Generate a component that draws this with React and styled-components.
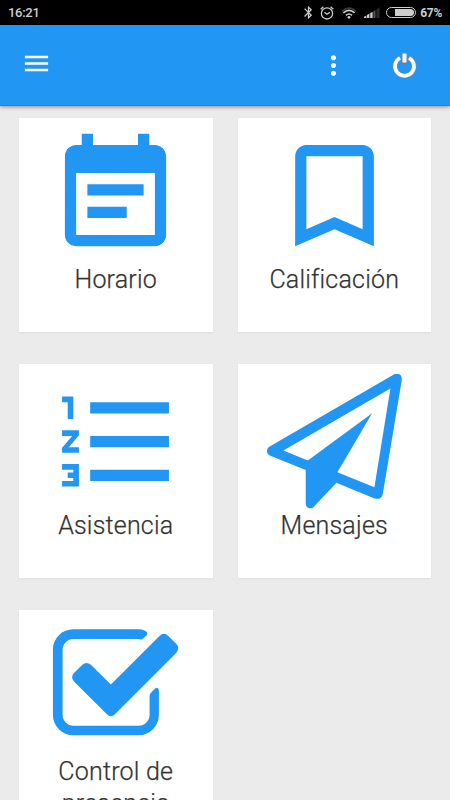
import React from 'react';
import styled, { createGlobalStyle } from 'styled-components';
import {
  MdBluetooth,
  MdBookmarkBorder,
  MdEventNote,
  MdFormatListNumbered,
  MdMenu,
  MdMoreVert,
} from 'react-icons/md';

const GlobalStyle = createGlobalStyle`
  * {
    box-sizing: border-box;
  }

  body {
    margin: 0;
    background-color: #ebebeb;
    font-family: Roboto, 'Liberation Sans', sans-serif;
  }
`;

// Styled components
const Screen = styled.div`
  display: flex;
  flex-direction: column;
  width: 450px;
  height: 800px;
  overflow: hidden;
  background-color: #ebebeb;
`;

const StatusBar = styled.div`
  display: flex;
  flex-shrink: 0;
  align-items: center;
  justify-content: space-between;
  height: 25px;
  padding: 0 8px;
  background-color: #000;
  color: #cdcdcd;
  font-size: 12px;
  font-weight: 700;

  svg {
    display: block;
  }
`;

const Clock = styled.span`
  font-size: 13px;
  font-weight: 500;
  letter-spacing: -0.3px;
`;

const StatusIcons = styled.div`
  display: flex;
  align-items: center;
`;

const StatusItem = styled.span`
  margin-left: ${({ $gap }) => $gap}px;
`;

const BatteryText = styled.span`
  margin-left: 4px;
  letter-spacing: -0.3px;
`;

const Battery = styled.span`
  display: flex;
  justify-content: flex-end;
  width: 30px;
  height: 11px;
  margin-left: 6px;
  padding: 1px;
  border: 1px solid #cdcdcd;
  border-radius: 6px;
`;

const BatteryLevel = styled.span`
  width: 19px;
  background-color: #cdcdcd;
  border-radius: 0 4px 4px 0;
`;

const Toolbar = styled.header`
  display: flex;
  flex-shrink: 0;
  align-items: center;
  justify-content: space-between;
  height: 81px;
  padding: 0 33px 0 21px;
  background-color: #2196f3;
  border-bottom: 1px solid #1787e8;
  box-shadow: 0 1px 4px rgba(0, 0, 0, 0.4);
  color: #fff;
  z-index: 1;
`;

const ToolbarButton = styled.button`
  display: flex;
  padding: 0;
  border: none;
  background: none;
  color: inherit;
  cursor: pointer;
  margin-bottom: ${({ $lift }) => $lift || 0}px;
`;

const ToolbarActions = styled.div`
  display: flex;
  align-items: center;
  gap: 43px;
  padding-top: 1px;
`;

const CardGrid = styled.main`
  display: grid;
  grid-template-columns: repeat(2, 193.5px);
  grid-auto-rows: 214.5px;
  gap: 31.8px 25px;
  padding: 11.7px 19px 0;
`;

const Card = styled.div`
  display: flex;
  flex-direction: column;
  align-items: center;
  padding: 10.5px 16px 0;
  background-color: #fff;
  box-shadow: 0 1px 2px rgba(0, 0, 0, 0.06);
  color: #2196f3;

  svg {
    flex-shrink: 0;
  }
`;

const CardTitle = styled.h2`
  margin: 0.4px 0 0;
  color: #333;
  font-size: 25px;
  font-weight: 300;
  line-height: 32px;
  letter-spacing: 0.2px;
  text-align: center;
  -webkit-text-stroke: 0.25px #333;
`;

const AlarmIcon = () => (
  <svg width="14" height="14" viewBox="0 0 14 14" fill="none" stroke="currentColor">
    <circle cx="7" cy="7.4" r="5.6" strokeWidth="1.3" />
    <path d="M4.4 6.2L7 8.2l2.8-1.8" strokeWidth="1.3" />
    <path d="M.7 3.2L3.4.8M13.3 3.2L10.6.8" strokeWidth="1.3" />
  </svg>
);

const WifiIcon = () => (
  <svg width="16" height="12" viewBox="0 0 16 12" fill="none" stroke="currentColor">
    <path d="M1 4.3Q8-2.1 15 4.3" stroke="#3a3a3a" strokeWidth="1.6" />
    <path d="M2.4 5.9Q8 .9 13.6 5.9" strokeWidth="1.6" />
    <path d="M4.9 8.4Q8 5.6 11.1 8.4" strokeWidth="1.5" />
    <circle cx="8" cy="10.3" r="1.4" fill="currentColor" stroke="none" />
  </svg>
);

const SignalIcon = () => (
  <svg width="16" height="11" viewBox="0 0 16 11" fill="currentColor">
    <path d="M0 11V9.7l2.4-1.3V11zM3 11V8l2.4-1.4V11zM6.2 11V6.3l2.4-1.5V11z" />
    <path d="M9.3 11V4.5l2.2-1.6V11z" opacity="0.4" />
    <path d="M12.4 11V2.4L15.6.3V11z" opacity="0.2" />
  </svg>
);

const PowerIcon = () => (
  <svg width="25" height="26" viewBox="0 0 25 26" fill="none">
    <path d="M8 4.8A9.5 9.5 0 1 0 17 4.8" stroke="#8a8f94" strokeWidth="4.8" />
    <rect x="9.8" y=".2" width="5.4" height="10" rx="1" fill="#8a8f94" />
    <path d="M8 5A9.5 9.5 0 1 0 17 5" stroke="#fff" strokeWidth="3.6" />
    <rect x="10.5" y=".5" width="4" height="9" rx="1" fill="#f4f4f4" />
  </svg>
);

const PlaneIcon = () => (
  <svg width="135" height="135" viewBox="0 .6 135 135" fill="currentColor" fillRule="evenodd">
    <path d="M127.7.6Q135-.9 134.8 6.5L115.7 121Q114.2 126.8 107.5 125L69.4 109.3 47.3 132.8C44.2 136.8 38.7 135 38.7 129.6V96.5L2.7 82C-.7 80.2-1.2 75.6 2.7 73.1ZM16.4 77L40.8 87.2 105.1 39.9 70.4 98.9 107.4 113.8 123.4 15.2Z" />
  </svg>
);

const CheckIcon = () => (
  <svg width="135" height="135" viewBox="-4.9 -8.2 135 135" fill="currentColor">
    <path d="M91.5 1.2Q96 3 93.8 6L89.7 9.7Q88.4 10.7 85.7 9.8H20.7A11 11 0 0 0 9.7 20.8V85.6A11 11 0 0 0 20.7 96.6H85.7A11 11 0 0 0 96.7 85.6V67Q96.7 64.8 98 63.5L101.7 59.7C103.5 57.7 106 58.4 106 61.5V85.6A20.3 20.3 0 0 1 85.7 106H20.3A20.3 20.3 0 0 1 0 85.6V20.3A20.3 20.3 0 0 1 20.3 0H85.7Q89 0 91.5 1.2Z" />
    <path d="M58 55.3L106.6 6.7Q111 2.5 115.4 6.7L123.5 14.8Q127.5 19 123.5 23.5L62 85Q58 89 54 85L21.1 52.2Q17.2 48 21.1 43.7L29.4 35.5Q33.5 31.9 38 35.5Z" />
  </svg>
);

const sections = [
  { title: 'Horario', icon: <MdEventNote size={135} /> },
  { title: 'Calificación', icon: <MdBookmarkBorder size={135} /> },
  { title: 'Asistencia', icon: <MdFormatListNumbered size={135} viewBox="-0.5 0 24 24" /> },
  { title: 'Mensajes', icon: <PlaneIcon /> },
  { title: 'Control de presencia', icon: <CheckIcon /> },
];

const App = () => {
  return (
    <Screen>
      <GlobalStyle />
      <StatusBar>
        <Clock>16:21</Clock>
        <StatusIcons>
          <MdBluetooth size={15} />
          <StatusItem $gap={4}><AlarmIcon /></StatusItem>
          <StatusItem $gap={7}><WifiIcon /></StatusItem>
          <StatusItem $gap={7}><SignalIcon /></StatusItem>
          <Battery>
            <BatteryLevel />
          </Battery>
          <BatteryText>67%</BatteryText>
        </StatusIcons>
      </StatusBar>
      <Toolbar>
        <ToolbarButton $lift={3} aria-label="Menú">
          <MdMenu size={31} />
        </ToolbarButton>
        <ToolbarActions>
          <ToolbarButton aria-label="Opciones">
            <MdMoreVert size={31} />
          </ToolbarButton>
          <ToolbarButton aria-label="Salir">
            <PowerIcon />
          </ToolbarButton>
        </ToolbarActions>
      </Toolbar>
      <CardGrid>
        {sections.map(({ title, icon }) => (
          <Card key={title}>
            {icon}
            <CardTitle>{title}</CardTitle>
          </Card>
        ))}
      </CardGrid>
    </Screen>
  );
};

export default App;
